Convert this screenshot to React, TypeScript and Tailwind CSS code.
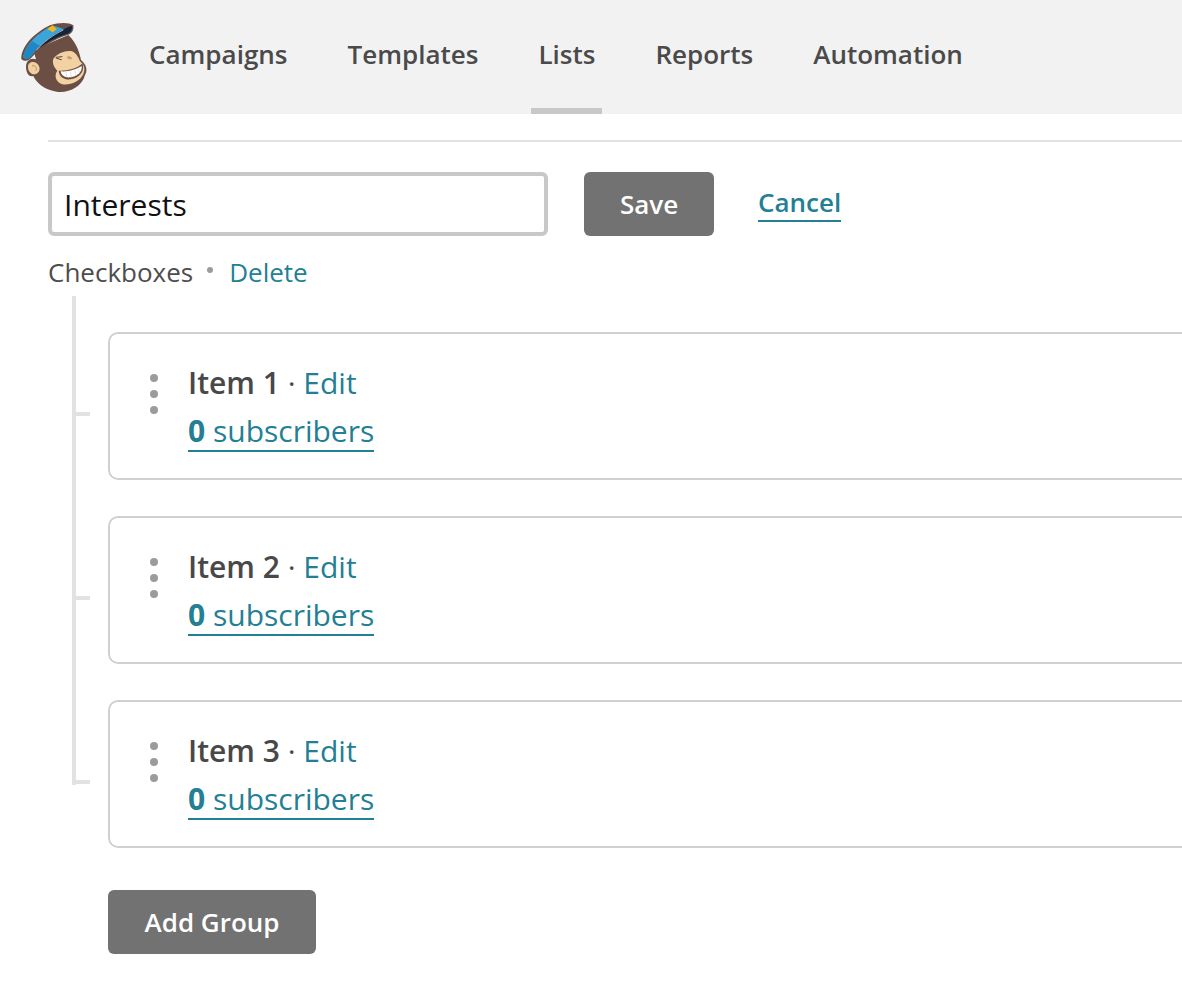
import React from 'react';

const navItems = ['Campaigns', 'Templates', 'Lists', 'Reports', 'Automation'];
const groupItems = ['Item 1', 'Item 2', 'Item 3'];

function Mascot() {
  return (
    <svg viewBox="60 60 210 225" className="w-[70px] h-[75px] shrink-0">
      {/* head */}
      <path d="M100 150 L205 105 C232 130 240 165 243 180 C262 195 262 215 255 225 C245 262 205 280 170 275 C135 270 110 250 100 228 C85 232 78 215 78 200 C78 182 92 172 108 178 Z" fill="#6b4e44" />
      {/* ear */}
      <path d="M84 200 C84 186 100 182 110 190 C122 200 122 216 108 222 C94 226 84 214 84 200 Z" fill="#f0cfa0" />
      <path d="M96 198 C104 194 112 202 108 212" fill="none" stroke="#b98d68" strokeWidth="3" />
      {/* face */}
      <path d="M160 176 C172 160 198 150 216 154 C232 162 236 175 240 184 C254 195 256 208 250 222 C240 246 205 258 185 252 C170 246 160 228 172 212 C165 205 155 190 160 176 Z" fill="#f2d2a2" />
      {/* mouth */}
      <path d="M176 212 C200 214 232 206 247 190 C256 212 240 234 212 238 C194 240 178 232 176 212 Z" fill="#6b4e44" />
      <path d="M182 214 C204 216 230 208 245 198 C248 214 232 230 212 232 C196 234 184 228 182 214 Z" fill="#ffffff" />
      <path d="M198 216 L200 232 M212 214 L214 232 M224 210 L228 228 M235 205 L239 220" stroke="#d8d2cb" strokeWidth="2" />
      {/* wink and nose */}
      <path d="M168 172 L186 170 M170 175 L184 179" stroke="#5a4036" strokeWidth="3" strokeLinecap="round" />
      <path d="M200 172 C206 166 216 170 216 176 C210 180 204 178 200 172 Z" fill="#c79a72" />
      {/* cap */}
      <path d="M64 170 C70 130 110 95 150 76 C175 68 205 66 220 76 C222 92 215 102 200 106 C165 118 135 135 112 155 C100 165 90 182 78 182 C68 182 62 178 64 170 Z" fill="#6b4e44" />
      <path d="M70 168 C76 135 112 100 150 81 L165 78 L192 88 C160 102 130 125 108 150 C98 162 90 176 80 176 C72 176 69 172 70 168 Z" fill="#3aa4dc" />
      <path d="M72 160 C78 146 88 133 97 124 L120 138 C112 144 108 150 104 155 C96 165 90 176 80 176 C72 176 69 170 72 160 Z" fill="#1f88c4" />
      <path d="M112 150 C135 122 165 100 192 88 C200 82 210 78 216 78 C217 90 212 98 200 102 C165 113 135 130 112 150 Z" fill="#10263c" />
      <path d="M110 150 C130 126 160 104 190 90" fill="none" stroke="#e8eef2" strokeWidth="2" />
      <path d="M142 86 L158 76 L170 88 L158 97 Z" fill="#f3b71c" />
    </svg>
  );
}

function ItemCard({ name }: { name: string }) {
  return (
    <div className="relative h-[148px] mr-[-12px] flex rounded-[10px] border-2 border-[#d0d0d0] bg-white pl-[34px] pt-[25px]">
      <div className="absolute left-[-34px] top-[78px] w-[14px] h-[4px] bg-[#e2e2e2]" />
      <div className="flex flex-col gap-[8px] w-[20px] pt-[15px] items-center">
        <span className="w-[8px] h-[8px] rounded-full bg-[#9b9b9b]" />
        <span className="w-[8px] h-[8px] rounded-full bg-[#9b9b9b]" />
        <span className="w-[8px] h-[8px] rounded-full bg-[#9b9b9b]" />
      </div>
      <div className="ml-[24px] text-[30px] leading-[48px]">
        <div className="h-[48px] whitespace-nowrap">
          <span className="font-semibold text-[#484848]">{name}</span>
          <span className="text-[#484848]"> · </span>
          <span className="text-[#247f95]">Edit</span>
        </div>
        <div className="w-fit h-[45px] whitespace-nowrap border-b-2 border-[#247f95] text-[#247f95] leading-[48px]">
          <span className="font-bold">0</span> subscribers
        </div>
      </div>
    </div>
  );
}

export default function App() {
  return (
    <div className="h-[982px] overflow-hidden bg-white font-['Open_Sans',sans-serif]">
      <header className="h-[114px] bg-[#f2f2f2] flex items-start pl-[20px]">
        <div className="pt-[20px]">
          <Mascot />
        </div>
        <nav className="flex ml-[59px] gap-[60px] text-[26px] font-semibold text-[#4a4a4a]">
          {navItems.map((item) => (
            <div key={item} className="relative h-[114px] leading-[108px]">
              {item}
              {item === 'Lists' && (
                <div className="absolute left-[-7px] right-[-7px] bottom-0 h-[6px] bg-[#c8c8c8]" />
              )}
            </div>
          ))}
        </nav>
      </header>

      <main className="pl-[48px] pt-[26px]">
        <div className="h-[2px] bg-[#e2e2e2]" />

        <div className="flex items-start mt-[30px]">
          <div className="w-[500px] h-[64px] rounded-[6px] border-4 border-[#c8c8c8] bg-white flex items-center pl-[12px] text-[30px] text-[#111111]">
            Interests
          </div>
          <button className="ml-[36px] w-[130px] h-[64px] rounded-[6px] bg-[#727272] text-[26px] font-semibold text-white">
            Save
          </button>
          <a className="ml-[44px] mt-[11px] h-[39px] border-b-2 border-[#247f95] text-[26px] leading-[38px] font-semibold text-[#247f95]">
            Cancel
          </a>
        </div>

        <div className="flex items-center mt-[15px] h-[42px] text-[26px]">
          <span className="text-[#4d4d4d]">Checkboxes</span>
          <span className="ml-[14px] w-[6px] h-[6px] rounded-full bg-[#9b9b9b] mb-[4px]" />
          <span className="ml-[16px] text-[#247f95]">Delete</span>
        </div>

        <div className="ml-[24px] mt-[3px] w-[4px] h-[489px] bg-[#e2e2e2]" />
        <div className="mt-[-453px] ml-[60px] flex flex-col gap-[36px]">
          {groupItems.map((item) => (
            <ItemCard key={item} name={item} />
          ))}
        </div>

        <button className="ml-[60px] mt-[42px] w-[208px] h-[64px] rounded-[6px] bg-[#727272] text-[26px] font-semibold text-white">
          Add Group
        </button>
      </main>
    </div>
  );
}
